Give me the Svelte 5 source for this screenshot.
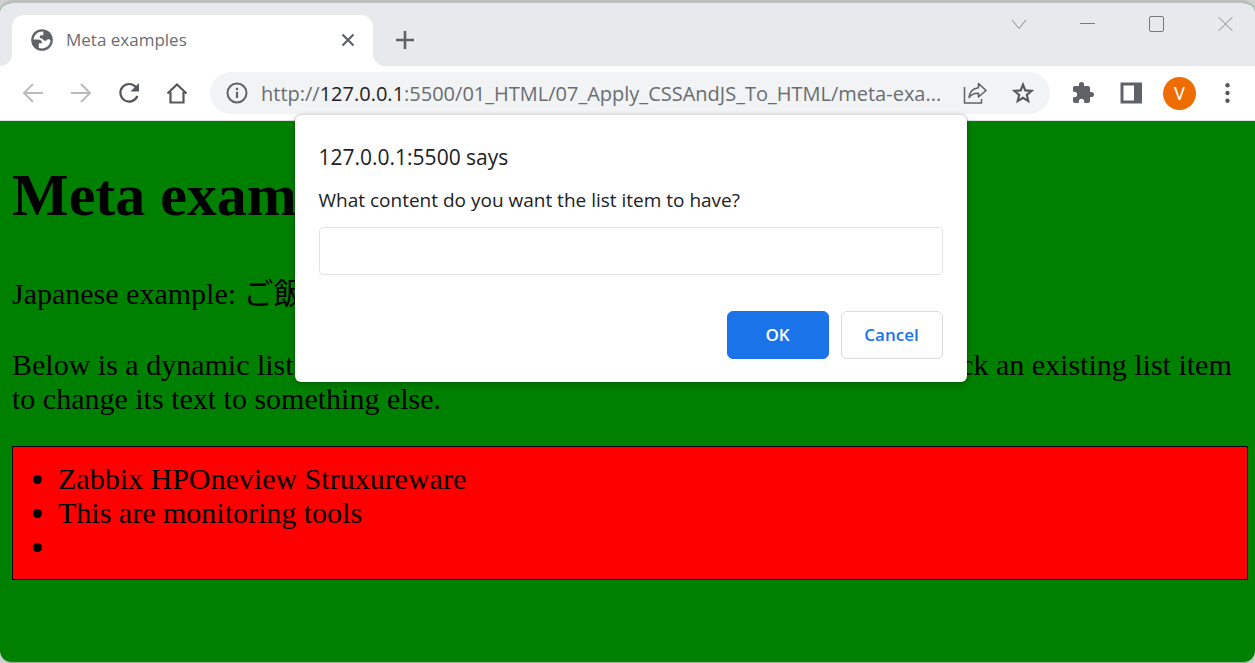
<script>
  let items = $state(['Zabbix HPOneview Struxureware', 'This are monitoring tools', '']);
  let answer = $state('');
</script>

<div class="window">
  <header class="tabs">
    <div class="tab">
      <svg class="globe" viewBox="0 0 22 22" width="22" height="22" aria-hidden="true">
        <circle cx="11" cy="11" r="10.800" fill="#5f6368" />
        <path d="M12.300 2.500C7.500 2 3.200 5.500 2.500 10.600H7.200C9.600 10.600 11 12 11 14.200H7.800V18.900C13.600 20.800 19.300 17 19.500 11.200C18.900 10.200 17.700 10 16.600 10.200C15.800 12 13.200 12.300 12.200 10.800C11.600 9.900 11 9.300 8.800 9.300V7.600C8.800 6.700 9.500 6.200 10.400 6.200H12.300Z" fill="#fff" />
      </svg>
      <span class="tab-title">Meta examples</span>
      <button class="icon" aria-label="Close tab">
        <svg viewBox="0 0 14 14" width="14" height="14"><path d="M1.500 1.500l11 11M12.500 1.500l-11 11" stroke="#5f6368" stroke-width="2.200" /></svg>
      </button>
    </div>
    <button class="icon new-tab" aria-label="New tab">
      <svg viewBox="0 0 18 18" width="18" height="18"><path d="M9 0v18M0 9h18" stroke="#5f6368" stroke-width="2.600" /></svg>
    </button>
    <div class="controls">
      <button class="icon" aria-label="Search tabs">
        <svg viewBox="0 0 16 16" width="16" height="16"><path d="M1 4l7 8.500L15 4" fill="none" stroke="#85878b" /></svg>
      </button>
      <button class="icon" aria-label="Minimize">
        <svg viewBox="0 0 16 16" width="16" height="16"><path d="M0 7.500h15" stroke="#77797c" /></svg>
      </button>
      <button class="icon" aria-label="Maximize">
        <svg viewBox="0 0 16 16" width="16" height="16"><rect x="0.500" y="0.500" width="14" height="15" rx="1.500" fill="none" stroke="#77797c" /></svg>
      </button>
      <button class="icon" aria-label="Close">
        <svg viewBox="0 0 16 16" width="16" height="16"><path d="M0.500 1l14 14M14.500 1L0.500 15" stroke="#85878b" /></svg>
      </button>
    </div>
  </header>

  <nav class="toolbar">
    <div class="nav-buttons">
      <button class="icon" aria-label="Back">
        <svg viewBox="0 0 24 24" width="24" height="24"><path d="M22 12H3M12 3l-9 9 9 9" fill="none" stroke="#b9bbbe" stroke-width="2" /></svg>
      </button>
      <button class="icon" aria-label="Forward">
        <svg viewBox="0 0 24 24" width="24" height="24"><path d="M2 12h19M12 3l9 9-9 9" fill="none" stroke="#b9bbbe" stroke-width="2" /></svg>
      </button>
      <button class="icon" aria-label="Reload">
        <svg viewBox="0 0 24 24" width="24" height="24"><path d="M19 6.200A8.800 8.800 0 1 0 20.400 15" fill="none" stroke="#54575b" stroke-width="2.200" /><path d="M22 2v8.500h-8.500z" fill="#54575b" /></svg>
      </button>
      <button class="icon" aria-label="Home">
        <svg viewBox="0 0 24 24" width="24" height="24"><path d="M2.500 12.500L12 3.500l9.500 9M5.500 11v10.500h13V11" fill="none" stroke="#54575b" stroke-width="2.200" /></svg>
      </button>
    </div>
    <div class="address">
      <button class="icon" aria-label="View site information">
        <svg viewBox="0 0 22 22" width="22" height="22"><circle cx="11" cy="11" r="9.500" fill="none" stroke="#5f6368" stroke-width="2" /><path d="M11 9.800v6.200M11 5.700v2.300" stroke="#5f6368" stroke-width="2.200" /></svg>
      </button>
      <a class="url" href="#top">http://<b>127.0.0.1</b>:5500/01_HTML/07_Apply_CSSAndJS_To_HTML/meta-exa...</a>
      <button class="icon" aria-label="Share">
        <svg viewBox="0 0 24 24" width="24" height="24"><path d="M1.500 6v16h17v-4" fill="none" stroke="#5f6368" stroke-width="1.500" /><path d="M15.500 2.500L23 9.500l-7.500 6.500v-3.800c-4.500-.2-7.200 1.200-9.500 4.300.5-5.800 4.200-9 9.500-9.700z" fill="none" stroke="#5f6368" stroke-width="1.600" stroke-linejoin="round" /></svg>
      </button>
      <button class="icon" aria-label="Bookmark this page">
        <svg viewBox="0 0 24 24" width="24" height="24"><path d="M12 3.600l2.300 5.800 6.300.5-4.800 4.100 1.500 6.100L12 16.800l-5.300 3.300 1.500-6.100-4.800-4.100 6.300-.5z" fill="none" stroke="#54575b" stroke-width="2.100" /></svg>
      </button>
    </div>
    <div class="tools">
      <button class="icon" aria-label="Extensions">
        <svg viewBox="0 0 24 24" width="24" height="24"><path d="M20.500 11H19V7c0-1.100-.9-2-2-2h-4V3.500a2.500 2.500 0 0 0-5 0V5H4c-1.100 0-1.990.9-1.990 2v3.800H3.500c1.490 0 2.700 1.210 2.700 2.700s-1.210 2.700-2.700 2.700H2V20c0 1.100.9 2 2 2h3.800v-1.500c0-1.490 1.210-2.700 2.700-2.700 1.490 0 2.700 1.210 2.700 2.700V22H17c1.100 0 2-.9 2-2v-4h1.500a2.500 2.500 0 0 0 0-5z" fill="#5f6368" /></svg>
      </button>
      <button class="icon" aria-label="Side panel">
        <svg viewBox="0 0 24 24" width="24" height="24"><path d="M1.500 1.500h21.500v21H1.500zM4.500 4.500v15h10.500v-15z" fill="#5f6368" fill-rule="evenodd" /></svg>
      </button>
      <button class="avatar" aria-label="Profile">V</button>
      <button class="icon" aria-label="Menu">
        <svg viewBox="0 0 24 24" width="24" height="24" fill="#54575b"><circle cx="11.500" cy="4.300" r="2.200" /><circle cx="11.500" cy="12" r="2.200" /><circle cx="11.500" cy="19.700" r="2.200" /></svg>
      </button>
    </div>
  </nav>

  <main id="top">
    <h1>Meta examples</h1>
    <p class="japanese">Japanese example: <span lang="ja">ご飯が熱い。</span></p>
    <p>Below is a dynamic list. Click anywhere on the page to add a new list item. Click an existing list item to change its text to something else.</p>
    <ul>
      {#each items as item}
        <li>{item}</li>
      {/each}
    </ul>
  </main>

  <form class="dialog" role="dialog" aria-labelledby="prompt-title" onsubmit={(e) => e.preventDefault()}>
    <h2 id="prompt-title">127.0.0.1:5500 says</h2>
    <label for="answer">What content do you want the list item to have?</label>
    <input id="answer" type="text" bind:value={answer} />
    <div class="actions">
      <button class="ok" type="submit">OK</button>
      <button class="cancel" type="button">Cancel</button>
    </div>
  </form>
</div>

<style>
  :global(body) {
    margin: 0;
    background: #d0d1d0;
  }
  .window {
    position: relative;
    box-sizing: border-box;
    min-height: 100vh;
    display: flex;
    flex-direction: column;
    border-top: 3px solid #bdbfbc;
    border-bottom: 1px solid #a9aca9;
    border-radius: 12px;
    overflow: hidden;
    background: #008000;
    font-family: "Open Sans", "Noto Sans", sans-serif;
  }
  button {
    font: inherit;
    cursor: pointer;
  }
  .icon {
    display: flex;
    padding: 0;
    border: 0;
    background: none;
  }
  .tabs {
    display: flex;
    height: 63px;
    padding-left: 12px;
    background: #e8e9ed;
  }
  .tab {
    position: relative;
    box-sizing: border-box;
    display: flex;
    align-items: center;
    gap: 13px;
    width: 361px;
    margin-top: 12px;
    padding: 0 18px 2px 19px;
    border-radius: 12px 12px 0 0;
    background: #fff;
  }
  .tab::before,
  .tab::after {
    content: "";
    position: absolute;
    bottom: 0;
    width: 12px;
    height: 12px;
  }
  .tab::before {
    right: 100%;
    background: radial-gradient(circle at 0 0, #e8e9ed 12px, #fff 12px);
  }
  .tab::after {
    left: 100%;
    background: radial-gradient(circle at 100% 0, #e8e9ed 12px, #fff 12px);
  }
  .tab-title {
    flex: 1;
    font-size: 17px;
    color: #6a6d71;
  }
  .new-tab {
    align-self: center;
    margin: 11px 0 0 23px;
  }
  .controls {
    display: flex;
    gap: 53px;
    margin: 13px 21px 0 auto;
  }
  .toolbar {
    display: flex;
    align-items: center;
    gap: 21px;
    height: 54px;
    padding: 0 15px 0 21px;
    border-bottom: 1px solid #dcdee0;
    background: #fff;
  }
  .nav-buttons {
    display: flex;
    gap: 24px;
  }
  .address {
    box-sizing: border-box;
    flex: 1;
    min-width: 0;
    display: flex;
    align-items: center;
    height: 42px;
    padding: 0 15px 0 16px;
    border-radius: 21px;
    background: #f1f3f4;
  }
  .url {
    flex: 1;
    min-width: 0;
    margin: 0 12px 0 13px;
    overflow: hidden;
    white-space: nowrap;
    font-size: 20px;
    color: #6a6d71;
    text-decoration: none;
  }
  .url b {
    font-weight: 400;
    color: #202124;
  }
  .address .icon + .icon {
    margin-left: 24px;
  }
  .tools {
    display: flex;
    align-items: center;
    gap: 20px;
  }
  .tools .icon + .icon {
    margin-left: 4px;
  }
  .avatar {
    width: 33px;
    height: 33px;
    padding: 0;
    border: 0;
    border-radius: 50%;
    background: #ef6c00;
    color: #fff;
    font-family: Roboto, sans-serif;
    font-size: 18px;
  }
  main {
    flex: 1;
    padding: 40px 7px 30px 12px;
    font-family: "Liberation Serif", "Noto Sans CJK JP", serif;
    font-size: 30px;
    line-height: 34px;
    color: #000;
  }
  h1 {
    margin: 0 0 40px;
    font-size: 60px;
    line-height: 68px;
  }
  p {
    margin: 0 0 30px;
  }
  .japanese {
    line-height: 49px;
  }
  ul {
    margin: 0;
    padding: 15px 15px 15px 45px;
    border: 1px solid #000;
    background: #f00;
  }
  li {
    min-height: 34px;
  }
  .dialog {
    position: absolute;
    top: 112px;
    left: calc(50% - 333px);
    box-sizing: border-box;
    width: 672px;
    padding: 26px 24px 23px;
    display: flex;
    flex-direction: column;
    border-radius: 6px;
    background: #fff;
    color: #202124;
    box-shadow: 0 0 2px #0006, 0 3px 8px #0003;
  }
  h2 {
    margin: 0 0 13px;
    font-size: 21px;
    font-weight: 400;
    line-height: 32px;
  }
  label {
    margin-bottom: 13px;
    font-size: 19px;
    line-height: 28px;
  }
  input {
    box-sizing: border-box;
    height: 48px;
    padding: 0 12px;
    border: 1px solid #e4e4e6;
    border-radius: 4px;
    font: inherit;
    font-size: 19px;
  }
  .actions {
    display: flex;
    justify-content: flex-end;
    gap: 12px;
    margin-top: 36px;
  }
  .actions button {
    width: 102px;
    height: 48px;
    padding: 0 0 2px;
    border: 1px solid #dadce0;
    border-radius: 6px;
    font-size: 17px;
    font-weight: 600;
    background: #fff;
    color: #1a73e8;
  }
  .actions .ok {
    border-color: #1a73e8;
    background: #1a73e8;
    color: #fff;
  }
</style>
